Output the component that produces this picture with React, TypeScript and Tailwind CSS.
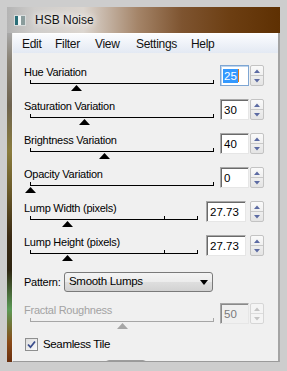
import React from 'react';

type SliderRow = {
  label: string;
  value: string;
  thumb: number;
  ticks?: number[];
  gap: string;
  boxW: string;
  spinGap: string;
  focused?: boolean;
  disabled?: boolean;
};

const rows: SliderRow[] = [
  { label: 'Hue Variation', value: '25', thumb: 46, gap: 'gap-[6px]', boxW: 'w-[29px]', spinGap: 'gap-[1px]', focused: true },
  { label: 'Saturation Variation', value: '30', thumb: 54, gap: 'gap-[6px]', boxW: 'w-[29px]', spinGap: 'gap-[1px]' },
  { label: 'Brightness Variation', value: '40', thumb: 74, gap: 'gap-[6px]', boxW: 'w-[29px]', spinGap: 'gap-[1px]' },
  { label: 'Opacity Variation', value: '0', thumb: 0, gap: 'gap-[6px]', boxW: 'w-[29px]', spinGap: 'gap-[1px]' },
  { label: 'Lump Width (pixels)', value: '27.73', thumb: 37, ticks: [134], gap: 'gap-[8px]', boxW: 'w-[40px]', spinGap: 'gap-[4px]' },
  { label: 'Lump Height (pixels)', value: '27.73', thumb: 37, ticks: [134], gap: 'gap-[8px]', boxW: 'w-[40px]', spinGap: 'gap-[4px]' },
];

const fractal: SliderRow = {
  label: 'Fractal Roughness',
  value: '50',
  thumb: 92,
  gap: 'gap-[6px]',
  boxW: 'w-[29px]',
  spinGap: 'gap-[1px]',
  disabled: true,
};

function Spinner({ disabled }: { disabled?: boolean }) {
  const fill = disabled ? '#c4c4c4' : '#5c6ba3';
  return (
    <div
      className={`w-[14px] h-[21px] flex flex-col rounded-[2px] border ${
        disabled ? 'border-[#d6d6d6] bg-[#f4f4f4]' : 'border-[#c3c3c3] bg-[linear-gradient(180deg,#fafafa,#e4e4e4)]'
      }`}
    >
      <div className={`flex-1 flex items-center justify-center border-b ${disabled ? 'border-[#dcdcdc]' : 'border-[#c8c8c8]'}`}>
        <svg width="6" height="4" viewBox="0 0 6 4">
          <path d="M0 4 L3 0.5 L6 4 Z" fill={fill} />
        </svg>
      </div>
      <div className="flex-1 flex items-center justify-center">
        <svg width="6" height="4" viewBox="0 0 6 4">
          <path d="M0 0 L3 3.5 L6 0 Z" fill={fill} />
        </svg>
      </div>
    </div>
  );
}

function Row({ r }: { r: SliderRow }) {
  const ink = r.disabled ? 'bg-[#a6a6a6]' : 'bg-black';
  return (
    <div className={`flex h-[34px] pl-[11px] pr-[14px] ${r.gap}`}>
      <div className="flex-1 flex flex-col">
        <div className={`h-[14px] leading-[14px] text-[11px] tracking-[-0.25px] ${r.disabled ? 'text-[#a3a3a3]' : 'text-black'}`}>
          {r.label}
        </div>
        <div className="relative ml-[6px] h-[20px]">
          <div className={`absolute left-0 top-[1px] w-px h-[4px] ${ink}`} />
          <div className={`absolute right-0 top-[1px] w-px h-[4px] ${ink}`} />
          {r.ticks?.map((t) => (
            <div key={t} className={`absolute top-[1px] w-px h-[4px] ${ink}`} style={{ left: t }} />
          ))}
          <div className={`absolute left-0 right-0 top-[4px] h-px ${ink}`} />
          <svg className="absolute top-[6px]" style={{ left: r.thumb - 5 }} width="11" height="6" viewBox="0 0 11 6">
            <path d="M0 6 L5.5 0 L11 6 Z" fill={r.disabled ? '#a6a6a6' : '#000'} />
          </svg>
        </div>
      </div>
      <div className={`flex items-start ${r.spinGap}`}>
        <div
          className={`${r.boxW} h-[21px] border flex items-center pl-[2px] text-[11.5px] ${
            r.focused
              ? 'border-[#7ea6d3] bg-white shadow-[inset_1px_1px_0_#bcd3ec]'
              : r.disabled
              ? 'border-[#a8a8a8] border-r-[#e6e6e6] border-b-[#e6e6e6] bg-[#f0f0f0] text-[#7a7a7a] shadow-[inset_1px_1px_0_#8a8a8a]'
              : 'border-[#a8a8a8] border-r-[#e6e6e6] border-b-[#e6e6e6] bg-white text-black shadow-[inset_1px_1px_0_#6a6a6a]'
          }`}
        >
          {r.focused ? (
            <>
              <span className="bg-[#3399ff] text-white leading-[14px] px-[1px]">{r.value}</span>
              <span className="w-px h-[13px] bg-[#e07a1a]" />
            </>
          ) : (
            <span className="leading-[14px] pl-[1px]">{r.value}</span>
          )}
        </div>
        <Spinner disabled={r.disabled} />
      </div>
    </div>
  );
}

export default function App() {
  return (
    <div className="w-[287px] h-[371px] bg-[#cdcdcd] overflow-hidden font-['Liberation_Sans',Arial,sans-serif] pt-[7px] px-[7px]">
      <div className="h-[355px] flex flex-col">
        {/* title bar */}
        <div className="h-[26px] flex items-center pl-[7px] bg-[linear-gradient(90deg,#b4b4b4_0%,#cfcdcb_10%,#dcd6d0_28%,#a48468_48%,#7e5430_64%,#6c3e12_82%,#5e3002_100%)]">
          <svg width="12" height="11" viewBox="0 0 12 11">
            <rect x="0" y="0" width="12" height="11" fill="#d8dcdc" />
            <rect x="1" y="1" width="3" height="9" fill="#2a6e78" />
            <rect x="4" y="1" width="3" height="9" fill="#f2f6f6" />
            <rect x="7" y="1" width="4" height="9" fill="#8a9c9c" />
          </svg>
          <span className="ml-[9px] text-[12px] text-[#141414] [text-shadow:0_0_6px_#fff,0_0_10px_#fff]">HSB Noise</span>
        </div>

        <div className="flex-1 flex min-h-0">
          {/* glass strip on the left */}
          <div className="w-[5px] bg-[linear-gradient(180deg,#a8a8a8_0%,#8a8376_8%,#6e6350_22%,#8a7c3e_36%,#6a5a2a_48%,#3a2a14_62%,#2e2412_72%,#5c9a56_84%,#8a4a18_94%,#6a3010_100%)]" />
          <div className="flex-1 flex flex-col border-l border-l-[#f4f4f4] border-r-[2px] border-r-[#a4a4a4] border-b border-b-[#9a9a9a] bg-[#f0f0f0] overflow-hidden">
            {/* menu bar */}
            <div className="h-[20px] shrink-0 flex items-center pl-[9px] text-[12px] tracking-[-0.3px] text-[#111] border-t border-t-[#fff] bg-[linear-gradient(180deg,#fbfcfe,#e3e9f3)]">
              <span className="w-[33px]">Edit</span>
              <span className="w-[40px]">Filter</span>
              <span className="w-[41px]">View</span>
              <span className="w-[55px]">Settings</span>
              <span>Help</span>
            </div>

            <div className="pt-[12px] flex flex-col">
              {rows.map((r) => (
                <Row key={r.label} r={r} />
              ))}

              {/* pattern */}
              <div className="h-[34px] flex items-start pt-[3px] pl-[11px]">
                <span className="w-[40px] leading-[20px] text-[11px] tracking-[-0.25px] text-black">Pattern:</span>
                <div className="w-[149px] h-[20px] rounded-[3px] border border-[#7a7a7a] flex items-center justify-between pl-[4px] pr-[4px] text-[11.5px] tracking-[-0.3px] bg-[linear-gradient(180deg,#f4f4f4_0%,#ececec_48%,#dedede_52%,#d2d2d2_100%)]">
                  <span>Smooth Lumps</span>
                  <svg width="8" height="5" viewBox="0 0 8 5">
                    <path d="M0 0 L8 0 L4 5 Z" fill="#000" />
                  </svg>
                </div>
              </div>

              <Row r={fractal} />

              {/* seamless tile */}
              <div className="h-[14px] flex items-center gap-[5px] pl-[12px]">
                <div className="w-[13px] h-[13px] border border-[#8e8f8f] bg-[linear-gradient(135deg,#dcdcdc,#fbfbfb)] flex items-center justify-center">
                  <svg width="9" height="9" viewBox="0 0 9 9">
                    <path d="M1 4.5 L3.5 7.2 L8 1.5" fill="none" stroke="#3a4d8c" strokeWidth="1.8" />
                  </svg>
                </div>
                <span className="text-[11.5px] tracking-[-0.35px] text-black leading-[14px]">Seamless Tile</span>
              </div>

              <div className="mt-[9px] ml-[92px] w-[42px] h-[20px] rounded-t-[4px] border border-[#9c9c9c] bg-[#fbfbfb]" />
            </div>
          </div>
        </div>
      </div>
    </div>
  );
}
